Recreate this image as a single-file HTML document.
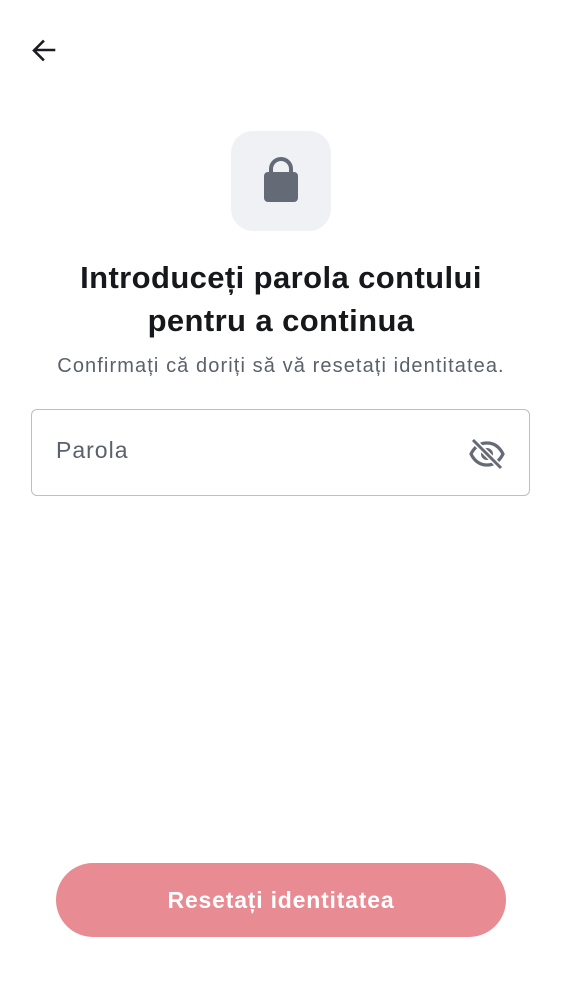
<!DOCTYPE html>
<html><head><meta charset="utf-8"><style>
body{margin:0;width:562px;height:1000px;background:#fff;font-family:"Liberation Sans",Roboto,sans-serif;position:relative;overflow:hidden}
.abs{position:absolute}
</style></head><body>
<svg class="abs" style="left:28px;top:36px" width="30" height="30" viewBox="0 0 30 30"><path d="M26 14H7M15 5.5L6 14.5L15 23.5" fill="none" stroke="#1b1c1f" stroke-width="2.6" stroke-linecap="square"/></svg>
<div class="abs" style="left:231px;top:131px;width:100px;height:100px;border-radius:22px;background:#eff1f5"></div>
<svg class="abs" style="left:231px;top:131px" width="100" height="100" viewBox="0 0 100 100"><path d="M40 42V38a10 10 0 0 1 20 0v4" fill="none" stroke="#646b76" stroke-width="4"/><rect x="33" y="41" width="34" height="30" rx="4" fill="#646b76"/></svg>
<div class="abs" style="left:0;width:562px;top:256px;text-align:center;font-size:31px;font-weight:bold;line-height:43px;color:#17181b;letter-spacing:0.4px">Introduceți parola contului<br>pentru a continua</div>
<div class="abs" style="left:0;width:562px;top:355px;text-align:center;font-size:20px;color:#5b616b;letter-spacing:1.1px">Confirmați că doriți să vă resetați identitatea.</div>
<div class="abs" style="left:31px;top:409px;width:497px;height:85px;border:1.5px solid #b9bfcc;border-radius:6px"></div>
<div class="abs" style="left:56px;top:437px;font-size:23px;color:#5b616b;letter-spacing:1px">Parola</div>
<svg class="abs" style="left:468px;top:436px" width="38" height="36" viewBox="0 0 38 36"><path d="M3 18C7 10 13 7 19 7s12 3 16 11c-4 8-10 11-16 11S7 26 3 18Z" fill="none" stroke="#646b76" stroke-width="3.2"/><circle cx="19" cy="18" r="6" fill="#646b76"/><path d="M5 4L33 32" stroke="#fff" stroke-width="6"/><path d="M5 4L33 32" stroke="#646b76" stroke-width="3"/></svg>
<div class="abs" style="left:56px;top:863px;width:450px;height:74px;border-radius:37px;background:#e98b93;color:#fff;text-align:center;line-height:74px;font-size:23px;font-weight:bold;letter-spacing:0.8px">Resetați identitatea</div>
</body></html>
